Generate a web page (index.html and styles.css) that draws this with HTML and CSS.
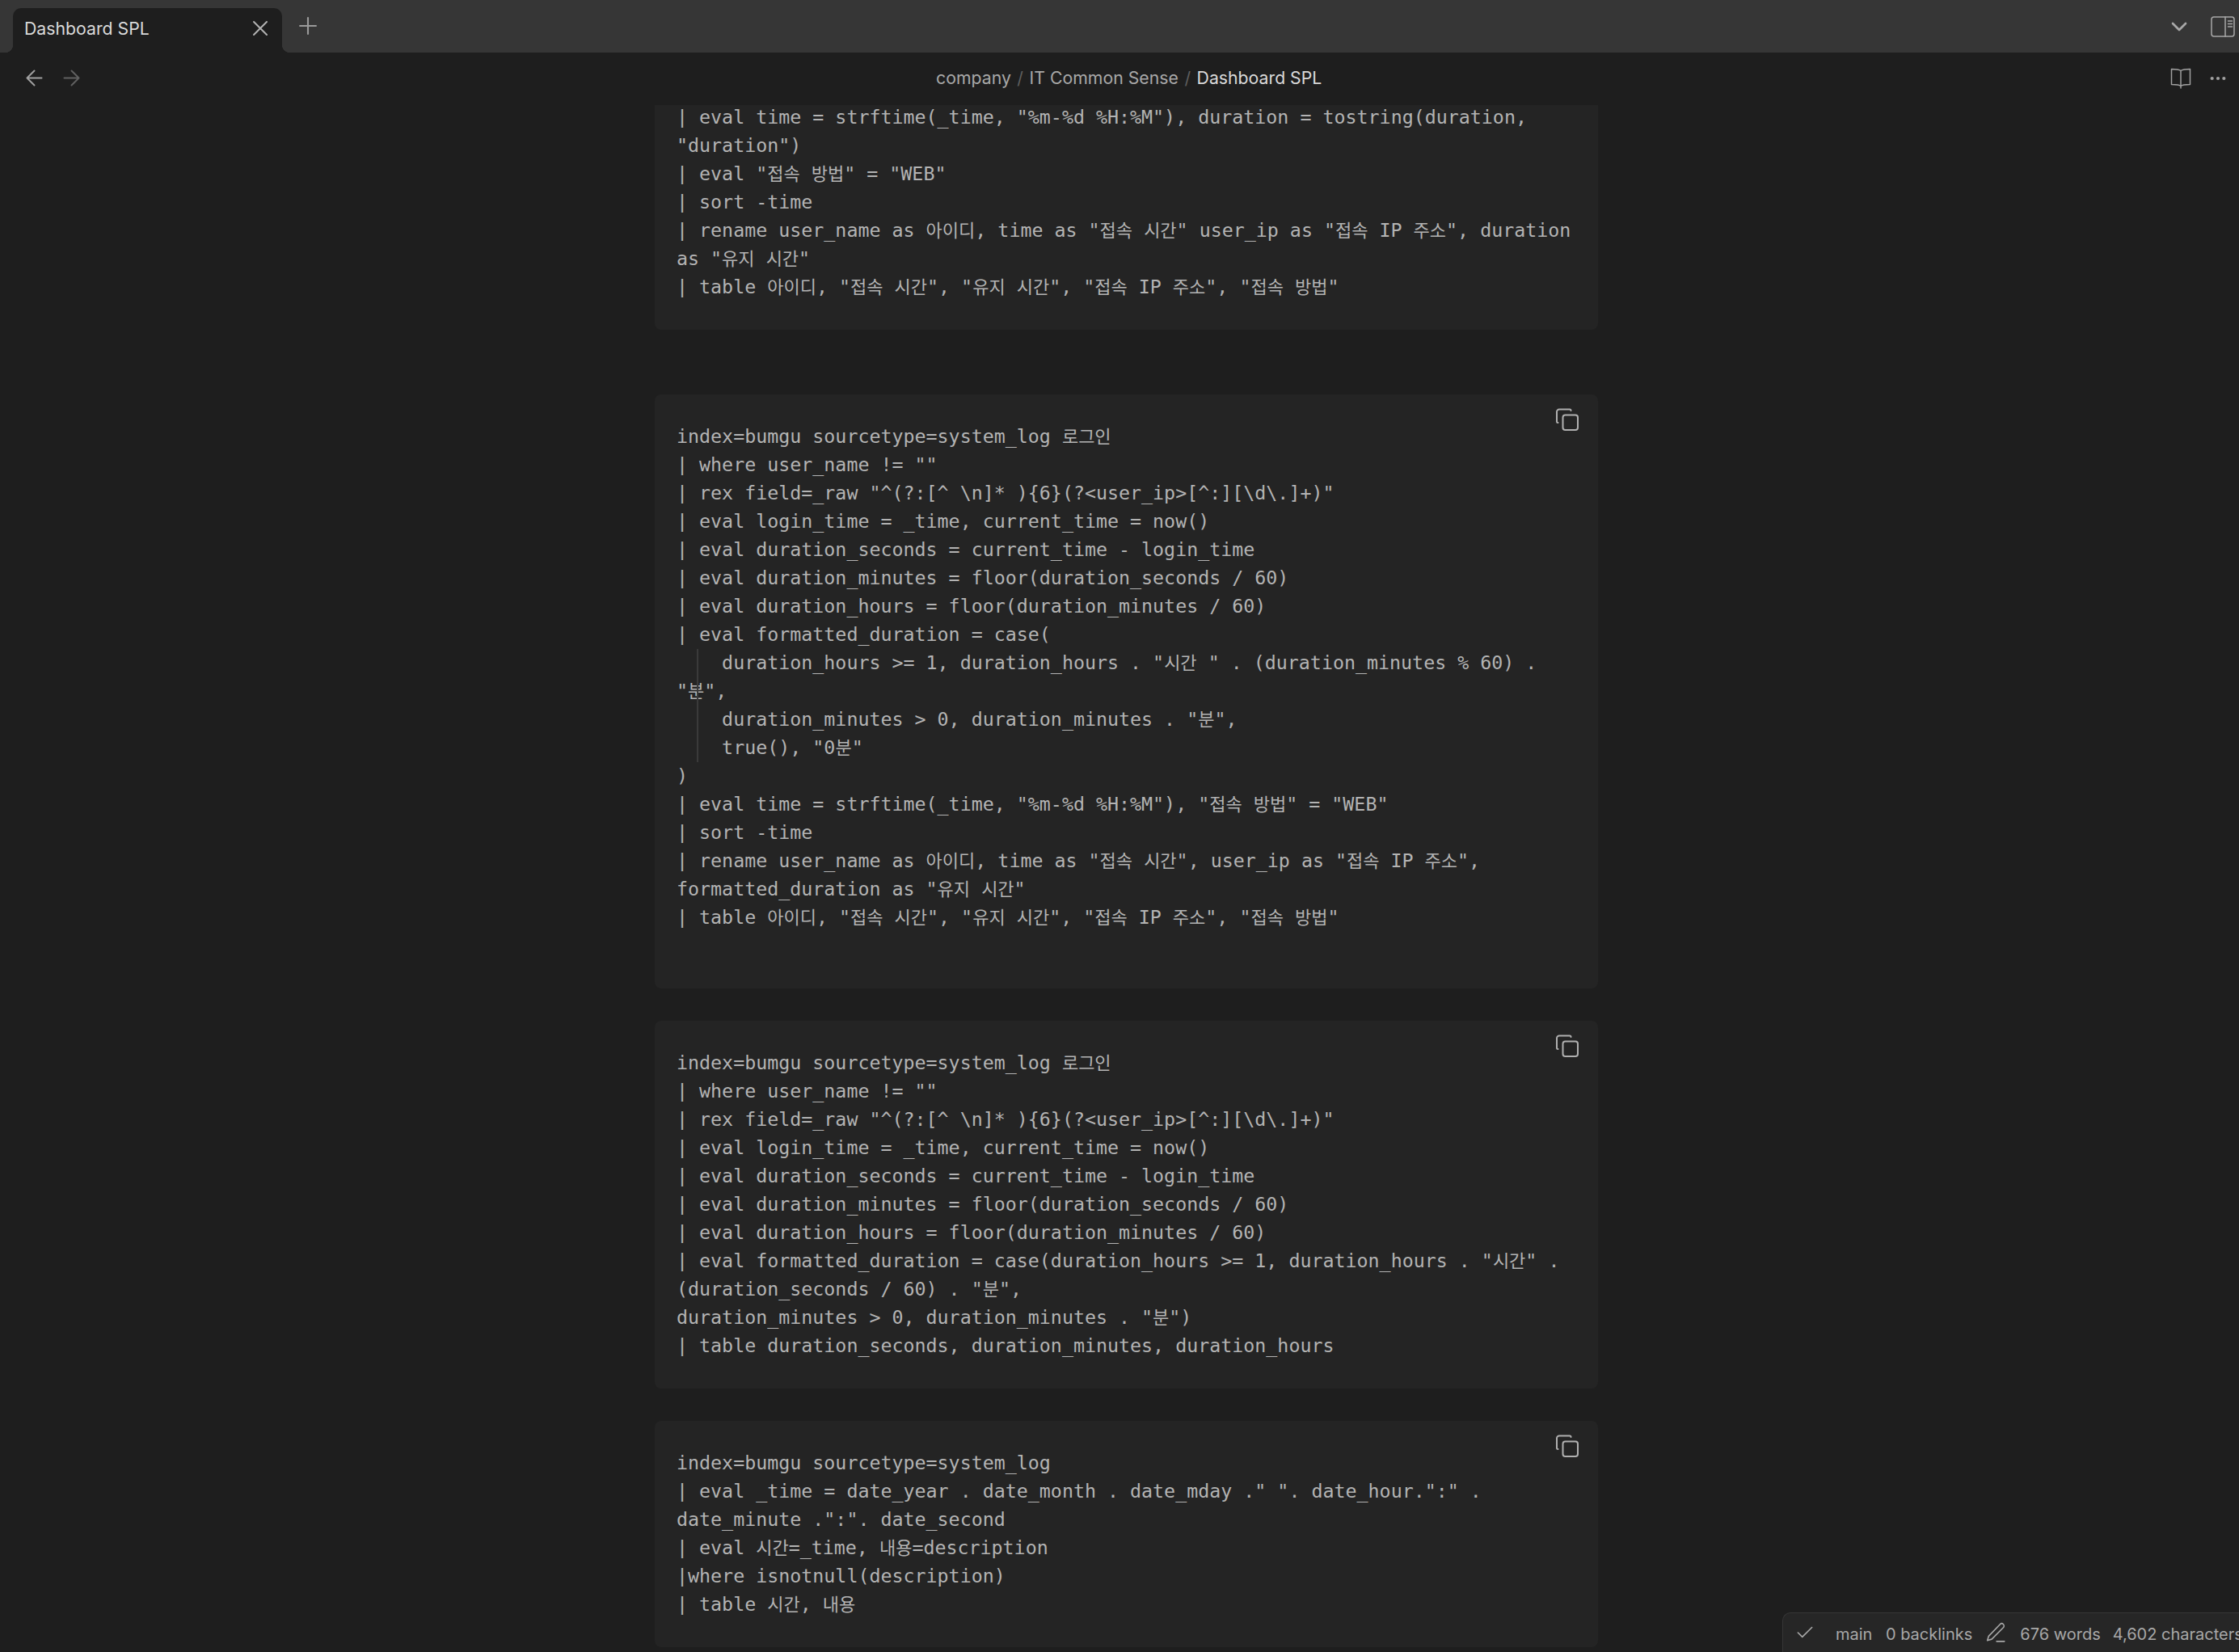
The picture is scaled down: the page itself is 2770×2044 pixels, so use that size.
FILE: index.html
```html
<!DOCTYPE html>
<html lang="ko">
<head>
<meta charset="utf-8">
<title>Dashboard SPL</title>
<link rel="stylesheet" href="styles.css">
</head>
<body>
<div class="app">
  <header class="tabbar">
    <div class="tab">
      <span class="tab-title">Dashboard SPL</span>
      <svg class="icon icon-close" viewBox="0 0 24 24"><path d="M18 6 6 18M6 6l12 12"/></svg>
    </div>
    <svg class="icon icon-plus" viewBox="0 0 24 24"><path d="M5 12h14M12 5v14"/></svg>
    <div class="tabbar-right">
      <svg class="icon icon-chevron" viewBox="0 0 24 24"><path d="m6 9 6 6 6-6"/></svg>
      <svg class="icon icon-sidebar" viewBox="0 0 30 26"><rect x="1" y="1" width="28" height="24" rx="3"/><path d="M18 1v24M21.500 6h5M21.500 9.500h5M21.500 13h5"/></svg>
    </div>
  </header>
  <nav class="navbar">
    <div class="nav-buttons">
      <svg class="icon icon-arrow" viewBox="0 0 24 24"><path d="m12 19-7-7 7-7M19 12H5"/></svg>
      <svg class="icon icon-arrow dim" viewBox="0 0 24 24"><path d="M5 12h14M12 5l7 7-7 7"/></svg>
    </div>
    <div class="breadcrumb"><span>company</span><i>/</i><span>IT Common Sense</span><i>/</i><b>Dashboard SPL</b></div>
    <div class="nav-actions">
      <svg class="icon icon-book" viewBox="0 0 26 26"><path d="M13 3.500C11 2 7 1.500 1.500 1.500v19c5 0 9.500 0 11.500 2 2-2 6.500-2 11.500-2v-19C19 1.500 15 2 13 3.500zM13 3.500V25"/></svg>
      <svg class="icon icon-more" viewBox="0 0 24 6"><circle cx="4" cy="3" r="2.300"/><circle cx="12" cy="3" r="2.300"/><circle cx="20" cy="3" r="2.300"/></svg>
    </div>
  </nav>
  <main class="view">
    <div class="column">
<div class="code first"><pre>| eval time = strftime(_time, "%m-%d %H:%M"), duration = tostring(duration,
"duration")
| eval "<span class="ko">접속</span> <span class="ko">방법</span>" = "WEB"
| sort -time
| rename user_name as <span class="ko">아이디</span>, time as "<span class="ko">접속</span> <span class="ko">시간</span>" user_ip as "<span class="ko">접속</span> IP <span class="ko">주소</span>", duration
as "<span class="ko">유지</span> <span class="ko">시간</span>"
| table <span class="ko">아이디</span>, "<span class="ko">접속</span> <span class="ko">시간</span>", "<span class="ko">유지</span> <span class="ko">시간</span>", "<span class="ko">접속</span> IP <span class="ko">주소</span>", "<span class="ko">접속</span> <span class="ko">방법</span>"</pre></div>

<div class="code wide-gap"><svg class="icon icon-copy" viewBox="0 0 28 28"><rect x="8.500" y="8.500" width="18.500" height="18.500" rx="3"/><path d="M18.500 3c0-1-.5-1.500-1.500-1.500H4A3 3 0 0 0 1 4.500v12c0 1 .5 1.500 1.500 1.500"/></svg><div class="indent-guide"></div><pre>index=bumgu sourcetype=system_log <span class="ko">로그인</span>
| where user_name != ""
| rex field=_raw "^(?:[^ \n]* ){6}(?&lt;user_ip&gt;[^:][\d\.]+)"
| eval login_time = _time, current_time = now()
| eval duration_seconds = current_time - login_time
| eval duration_minutes = floor(duration_seconds / 60)
| eval duration_hours = floor(duration_minutes / 60)
| eval formatted_duration = case(
    duration_hours &gt;= 1, duration_hours . "<span class="ko">시간</span> " . (duration_minutes % 60) .
"<span class="ko">분</span>",
    duration_minutes &gt; 0, duration_minutes . "<span class="ko">분</span>",
    true(), "0<span class="ko">분</span>"
)
| eval time = strftime(_time, "%m-%d %H:%M"), "<span class="ko">접속</span> <span class="ko">방법</span>" = "WEB"
| sort -time
| rename user_name as <span class="ko">아이디</span>, time as "<span class="ko">접속</span> <span class="ko">시간</span>", user_ip as "<span class="ko">접속</span> IP <span class="ko">주소</span>",
formatted_duration as "<span class="ko">유지</span> <span class="ko">시간</span>"
| table <span class="ko">아이디</span>, "<span class="ko">접속</span> <span class="ko">시간</span>", "<span class="ko">유지</span> <span class="ko">시간</span>", "<span class="ko">접속</span> IP <span class="ko">주소</span>", "<span class="ko">접속</span> <span class="ko">방법</span>"
 </pre></div>

<div class="code"><svg class="icon icon-copy" viewBox="0 0 28 28"><rect x="8.500" y="8.500" width="18.500" height="18.500" rx="3"/><path d="M18.500 3c0-1-.5-1.500-1.500-1.500H4A3 3 0 0 0 1 4.500v12c0 1 .5 1.500 1.500 1.500"/></svg><pre>index=bumgu sourcetype=system_log <span class="ko">로그인</span>
| where user_name != ""
| rex field=_raw "^(?:[^ \n]* ){6}(?&lt;user_ip&gt;[^:][\d\.]+)"
| eval login_time = _time, current_time = now()
| eval duration_seconds = current_time - login_time
| eval duration_minutes = floor(duration_seconds / 60)
| eval duration_hours = floor(duration_minutes / 60)
| eval formatted_duration = case(duration_hours &gt;= 1, duration_hours . "<span class="ko">시간</span>" .
(duration_seconds / 60) . "<span class="ko">분</span>",
duration_minutes &gt; 0, duration_minutes . "<span class="ko">분</span>")
| table duration_seconds, duration_minutes, duration_hours</pre></div>

<div class="code"><svg class="icon icon-copy" viewBox="0 0 28 28"><rect x="8.500" y="8.500" width="18.500" height="18.500" rx="3"/><path d="M18.500 3c0-1-.5-1.500-1.500-1.500H4A3 3 0 0 0 1 4.500v12c0 1 .5 1.500 1.500 1.500"/></svg><pre>index=bumgu sourcetype=system_log
| eval _time = date_year . date_month . date_mday ." ". date_hour.":" .
date_minute .":". date_second
| eval <span class="ko">시간</span>=_time, <span class="ko">내용</span>=description
|where isnotnull(description)
| table <span class="ko">시간</span>, <span class="ko">내용</span></pre></div>
    </div>
  </main>
  <footer class="status">
    <svg class="icon icon-check" viewBox="0 0 24 24"><path d="M20 6 9 17l-5-5"/></svg>
    <span class="status-main">main</span>
    <span class="status-links">0 backlinks</span>
    <svg class="icon icon-pencil" viewBox="0 0 24 24"><path d="M17 2.500a2.600 2.600 0 0 1 3.700 3.700L7.500 19.500 2.500 21l1.500-5zM13 22h9"/></svg>
    <span class="status-words">676 words</span>
    <span class="status-chars">4,602 characters</span>
  </footer>
</div>
</body>
</html>
```
FILE: styles.css
```css
* { box-sizing: border-box; }
html, body { margin: 0; height: 100%; background: #1e1e1e; overflow: hidden; }
body { font-family: Inter, "Noto Sans", sans-serif; }
.app { position: relative; width: 2770px; height: 2044px; display: flex; flex-direction: column; overflow: hidden; }
.icon { display: block; flex: none; fill: none; stroke: currentColor; stroke-width: 2; stroke-linecap: round; stroke-linejoin: round; }

.tabbar { flex: none; height: 65px; background: #363636; display: flex; align-items: flex-start; position: relative; }
.tab { width: 333px; height: 55px; margin: 10px 0 0 16px; background: #1e1e1e; border-radius: 10px 10px 0 0; display: flex; align-items: flex-start; padding: 9px 17px 0 14px; position: relative; color: #dadada; }
.tab::before, .tab::after { content: ""; position: absolute; bottom: 0; width: 10px; height: 10px; }
.tab::before { left: -10px; background: radial-gradient(circle at 0 0, transparent 10px, #1e1e1e 10.500px); }
.tab::after { right: -10px; background: radial-gradient(circle at 100% 0, transparent 10px, #1e1e1e 10.500px); }
.tab-title { flex: 1; font-size: 21.250px; line-height: 32px; }
.icon-close { width: 32px; height: 32px; margin: 0 -6px 0 0; color: #b3b3b3; stroke-width: 1.500; }
.icon-plus { width: 34px; height: 34px; margin: 15px 0 0 15px; color: #9a9a9a; stroke-width: 1.500; }
.tabbar-right { margin-left: auto; display: flex; align-items: center; height: 65px; padding-right: 5px; color: #a8a8a8; }
.icon-chevron { width: 32px; height: 32px; margin-right: 23px; }
.icon-sidebar { width: 30px; height: 26px; stroke-width: 1.500; }

.navbar { flex: none; height: 65px; background: #1e1e1e; display: flex; align-items: center; position: relative; z-index: 2; }
.nav-buttons { display: flex; gap: 15px; padding-left: 27px; color: #a0a0a0; width: 300px; margin-top: -2px; }
.icon-arrow { width: 31px; height: 31px; stroke-width: 1.500; }
.icon-arrow.dim { color: #606060; }
.breadcrumb { position: absolute; left: 1158px; top: 16px; font-size: 21.250px; line-height: 30px; color: #a8a8a8; white-space: nowrap; display: flex; }
.breadcrumb i { font-style: normal; color: #5e5e5e; margin: 0 7.500px; }
.breadcrumb b { font-weight: 400; color: #dadada; }
.nav-actions { margin-left: auto; display: flex; align-items: center; gap: 22px; padding-right: 15px; color: #a0a0a0; margin-top: -2px; }
.icon-book { width: 26px; height: 26px; stroke-width: 1.500; }
.icon-more { width: 22px; height: 6px; fill: currentColor; stroke: none; }

.view { flex: 1; min-height: 0; overflow: hidden; padding-left: 17px; }
.column { width: 1167px; margin: 0 auto; display: flex; flex-direction: column; gap: 40px; }
.code { position: relative; flex: none; background: #242424; border-radius: 8px; padding: 34px 27px 36px; }
.code.first { margin-top: -37px; }
.code.wide-gap { margin-top: 40px; }
.code pre { margin: 0; font-family: "DejaVu Sans Mono", "Noto Sans CJK KR", monospace; font-size: 23.300px; line-height: 35px; color: #b3b3b3; white-space: pre; }
.ko { font-family: "Noto Sans CJK KR", sans-serif; font-size: 22px; line-height: 1; }
.icon-copy { position: absolute; top: 17px; right: 24px; width: 28px; height: 28px; color: #b0b0b0; stroke-width: 2; }
.indent-guide { position: absolute; left: 52px; top: 315px; width: 2px; height: 140px; background: #3a3a3a; }

.status { position: absolute; left: 2205px; top: 1995px; width: 600px; height: 49px; background: #262626; border: 1px solid #363636; border-width: 1px 0 0 1px; border-radius: 10px 0 0 0; display: flex; align-items: center; color: #a8a8a8; font-size: 20px; white-space: nowrap; }
.status span { padding-top: 3px; }
.icon-check { width: 26px; height: 26px; margin-left: 14px; stroke-width: 1.500; }
.status-main { margin-left: 25px; }
.status-links { margin-left: 16.500px; }
.icon-pencil { width: 26px; height: 26px; margin-left: 16px; stroke-width: 1.500; }
.status-words { margin-left: 17px; }
.status-chars { margin-left: 15px; }
```
